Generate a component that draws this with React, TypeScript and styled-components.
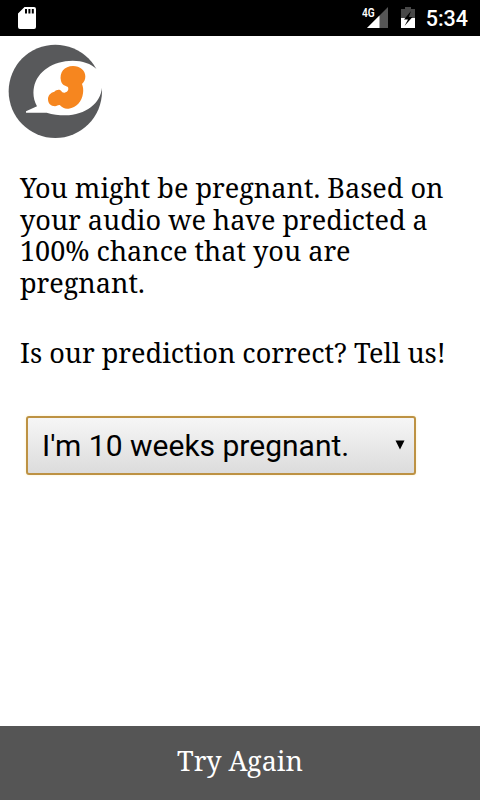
import React, { useState } from 'react';
import styled, { createGlobalStyle } from 'styled-components';

const App: React.FC = () => {
  const [open, setOpen] = useState(false);

  return (
    <>
      <GlobalStyle />
      <Screen>
        <StatusBar>
          <SdCardIcon width="18" height="22" viewBox="0 0 18 22">
            <path
              fill="#fff"
              fillRule="evenodd"
              d="M6.5 0H16a2 2 0 0 1 2 2v18a2 2 0 0 1-2 2H2a2 2 0 0 1-2-2V6.500zM7 2v4.500h2V2zm3.400 0v4.500h2V2zm3.400 0v4.500h2V2z"
            />
          </SdCardIcon>
          <Signal>
            <Network>4G</Network>
            <svg width="21" height="21" viewBox="0 0 21 21">
              <path fill="#555" d="M21 0v21H0z" />
              <path fill="#fff" d="M12.500 8.500V21H0z" />
            </svg>
          </Signal>
          <BatteryIcon width="14" height="22" viewBox="0 0 14 22">
            <path fill="#484848" d="M4 0h6v2h4v9H0V2h4z" />
            <path fill="#fff" d="M0 11h14v10H0z" />
            <path fill="#000" d="M10 4L3 12.500h4L3.500 19 11.500 10H7.800z" />
          </BatteryIcon>
          <Clock>5:34</Clock>
        </StatusBar>

        <Header>
          <svg width="96" height="96" viewBox="24 129 288 288">
            <circle cx="166" cy="274" r="140" fill="#58595b" />
            <path
              fill="#fff"
              d="M78 334L111 319C101 301 98 281 102 261C112 214 158 183 218 182C248 182 272 191 290 207L314 207V263H306C302 309 257 345 196 346C176 346 158 344 140 338L78 338Z"
            />
            <path
              fill="#f6861f"
              d="M219 198C240 198 256 211 256 229C256 238 253 246 246 252C249 259 251 269 249 280C246 304 229 324 206 326C195 328 188 323 180 316C176 313 172 318 165 319C152 318 144 310 144 297C144 287 151 278 163 275C170 268 179 267 184 273C186 276 189 279 194 278C202 277 207 270 204 262C202 257 187 259 183 243C177 218 193 198 219 198Z"
            />
          </svg>
        </Header>

        <Content>
          <Message>
            You might be pregnant. Based on your audio we have predicted a 100% chance that you are
            pregnant.
          </Message>
          <Message>Is our prediction correct? Tell us!</Message>
          <Select type="button" aria-expanded={open} onClick={() => setOpen(!open)}>
            <span>I'm 10 weeks pregnant.</span>
            <svg width="10" height="10" viewBox="0 0 10 10">
              <path d="M0.500 0.500h9L5 9.500z" />
            </svg>
          </Select>
        </Content>

        <TryAgain type="button">Try Again</TryAgain>
      </Screen>
    </>
  );
};

export default App;

const serif = `'Noto Serif', 'Droid Serif', 'Liberation Serif', serif`;

const GlobalStyle = createGlobalStyle`
  * {
    box-sizing: border-box;
  }
  body {
    margin: 0;
    background: #fff;
  }
`;

const Screen = styled.div`
  display: flex;
  flex-direction: column;
  width: 480px;
  height: 800px;
  overflow: hidden;
  background: #fff;
  color: #000;
`;

const StatusBar = styled.div`
  display: flex;
  align-items: flex-start;
  height: 36px;
  padding: 7px 12px 0 18px;
  background: #000;
  color: #fff;
  font-family: Roboto, sans-serif;
`;

const SdCardIcon = styled.svg`
  margin-right: auto;
`;

const Signal = styled.div`
  display: flex;
  margin-right: 13px;
`;

const Network = styled.span`
  width: 5px;
  white-space: nowrap;
  font-size: 13px;
  line-height: 11px;
  font-weight: 600;
  transform: scaleX(0.78);
  transform-origin: left;
`;

const BatteryIcon = styled.svg`
  margin-right: 11px;
`;

const Clock = styled.span`
  font-size: 21.5px;
  line-height: 24px;
  font-weight: 500;
`;

const Header = styled.header`
  height: 136px;
  padding: 7px 8px 0;
`;

const Content = styled.main`
  flex: 1;
  padding: 0 20px;
`;

const Message = styled.p`
  margin: 0 0 39px;
  font-family: ${serif};
  font-size: 27.050px;
  line-height: 31.6px;
`;

const Select = styled.button`
  display: flex;
  align-items: center;
  justify-content: space-between;
  width: 390px;
  height: 59px;
  margin: 47px 0 0 6px;
  padding: 0 9px 0 14px;
  border: 2px solid #bd9243;
  border-radius: 3px;
  background: linear-gradient(#f6f6f6, #dcdcdc);
  box-shadow: 0 0 3px rgba(255, 225, 120, 0.4);
  color: #000;
  font-family: Roboto, sans-serif;
  font-size: 30px;
`;

const TryAgain = styled.button`
  height: 74px;
  padding: 0 0 4px;
  border: none;
  background: #555;
  color: #fff;
  font-family: ${serif};
  font-size: 27px;
  line-height: 32px;
`;
